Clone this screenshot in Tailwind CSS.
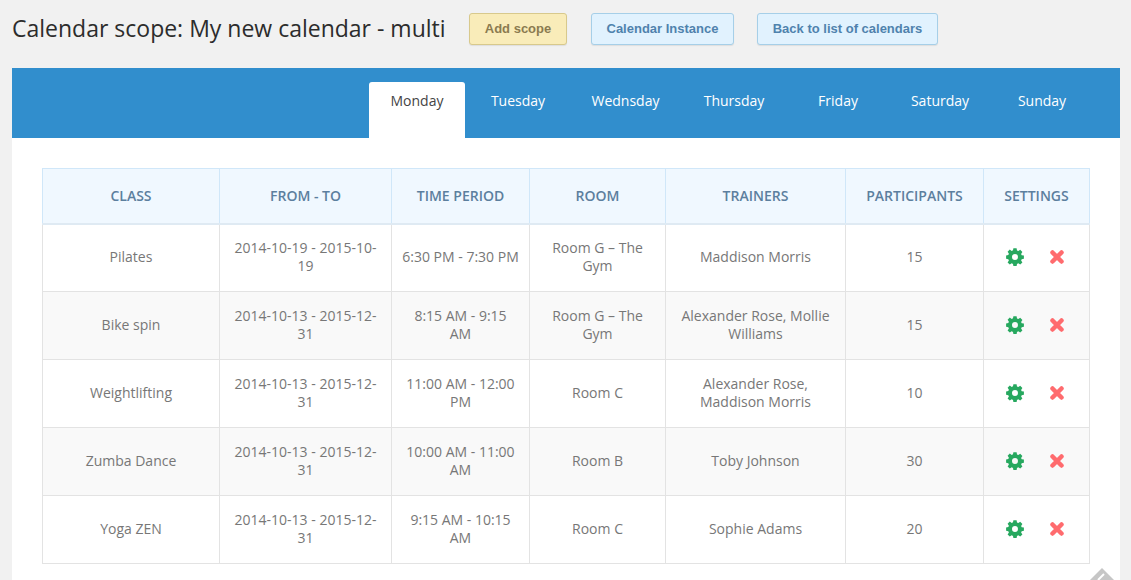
<!DOCTYPE html>
<html lang="en">
<head>
  <meta charset="UTF-8">
  <title>Calendar scope</title>
  <script src="https://cdn.jsdelivr.net/npm/@tailwindcss/browser@4"></script>
</head>
<body class="bg-[#f1f1f1] h-[580px] overflow-hidden font-['Open_Sans',sans-serif] relative">
  <!-- Title and actions -->
  <header class="flex items-center h-[68px] pl-3 pb-[11px]">
    <h1 class="text-[23px] leading-8 text-[#2c2c2c] w-[457px] whitespace-nowrap -mt-[2px]">Calendar scope: My new calendar - multi</h1>
    <a class="w-[98px] h-8 flex items-center justify-center rounded-[3px] border border-[#d8c98c] bg-[#f9ecb9] text-[#8b7b50] text-[13px] font-bold font-['Liberation_Sans',sans-serif] shadow-[0_1px_1px_rgba(0,0,0,0.08)]">Add scope</a>
    <a class="ml-6 w-[143px] h-8 flex items-center justify-center rounded-[3px] border border-[#a6cfe8] bg-[#e1f2fe] text-[#4f82ad] text-[13px] font-bold font-['Liberation_Sans',sans-serif] shadow-[0_1px_1px_rgba(0,0,0,0.08)]">Calendar Instance</a>
    <a class="ml-[23px] w-[181px] h-8 flex items-center justify-center rounded-[3px] border border-[#a6cfe8] bg-[#e1f2fe] text-[#4f82ad] text-[13px] font-bold font-['Liberation_Sans',sans-serif] shadow-[0_1px_1px_rgba(0,0,0,0.08)]">Back to list of calendars</a>
  </header>

  <main class="mx-3 w-[1108px] bg-white h-[512px]">
    <!-- Day tabs -->
    <nav class="h-[70px] bg-[#318ecd] pl-[357px] pt-[14px] flex text-[14px] text-white">
      <div class="w-[96px] h-14 rounded-t-[3px] bg-white text-[#444] text-center pt-[7px] leading-6 -mb-px">Monday</div>
      <div class="ml-1 w-[98px] text-center pt-[7px] leading-6">Tuesday</div>
      <div class="w-[117px] text-center pt-[7px] leading-6">Wednsday</div>
      <div class="w-[100px] text-center pt-[7px] leading-6">Thursday</div>
      <div class="w-[108px] text-center pt-[7px] leading-6">Friday</div>
      <div class="w-[96px] text-center pt-[7px] leading-6">Saturday</div>
      <div class="w-[108px] text-center pt-[7px] leading-6">Sunday</div>
    </nav>

    <div class="pt-[30px] pl-[30px]">
      <table class="w-[1047px] table-fixed border-collapse text-[14px] leading-[18px] text-[#777] text-center">
        <colgroup>
          <col class="w-[177px]"><col class="w-[172px]"><col class="w-[138px]"><col class="w-[136px]"><col class="w-[180px]"><col class="w-[138px]"><col class="w-[106px]">
        </colgroup>
        <thead>
          <tr class="h-[55px] bg-[#f0f8ff] text-[#5c7f9e] uppercase font-semibold">
            <th class="border border-[#d0e7f9] border-b-2 border-b-[#dfeaf3] font-semibold">Class</th>
            <th class="border border-[#d0e7f9] border-b-2 border-b-[#dfeaf3] font-semibold">From - To</th>
            <th class="border border-[#d0e7f9] border-b-2 border-b-[#dfeaf3] font-semibold">Time period</th>
            <th class="border border-[#d0e7f9] border-b-2 border-b-[#dfeaf3] font-semibold">Room</th>
            <th class="border border-[#d0e7f9] border-b-2 border-b-[#dfeaf3] font-semibold">Trainers</th>
            <th class="border border-[#d0e7f9] border-b-2 border-b-[#dfeaf3] font-semibold">Participants</th>
            <th class="border border-[#d0e7f9] border-b-2 border-b-[#dfeaf3] font-semibold">Settings</th>
          </tr>
        </thead>
        <tbody>
          <tr class="h-[68px]">
            <td class="border border-[#e3e3e3] px-[10px] pb-px">Pilates</td>
            <td class="border border-[#e3e3e3] px-[10px] pb-px">2014-10-19 - 2015-10-19</td>
            <td class="border border-[#e3e3e3] px-[10px] pb-px">6:30 PM - 7:30 PM</td>
            <td class="border border-[#e3e3e3] px-[10px] pb-px">Room G – The Gym</td>
            <td class="border border-[#e3e3e3] px-[10px] pb-px">Maddison Morris</td>
            <td class="border border-[#e3e3e3] px-[10px] pb-px">15</td>
            <td class="border border-[#e3e3e3] pb-px">
              <div class="flex items-center pl-[22px] gap-[26px]">
                <svg class="w-[18px] h-[18px]" viewBox="0 0 18 18"><path fill="#27a85f" fill-rule="evenodd" d="M7.4 0.3h3.2l.4 2.2 1.3.6 1.9-1.3 2.2 2.2-1.3 1.9.6 1.3 2.2.4v3.2l-2.2.4-.6 1.3 1.3 1.9-2.2 2.2-1.9-1.3-1.3.6-.4 2.2H7.4l-.4-2.2-1.3-.6-1.9 1.3-2.2-2.2 1.3-1.9-.6-1.3-2.2-.4V7.4l2.2-.4.6-1.3-1.3-1.9 2.2-2.2 1.9 1.3 1.3-.6zM9 6a3 3 0 1 0 0 6 3 3 0 0 0 0-6z"/></svg>
                <svg class="w-[14px] h-[14px]" viewBox="0 0 14 14"><path stroke="#ff6b6e" stroke-width="4.500" stroke-linecap="round" d="M2.500 2.500l9 9M11.500 2.500l-9 9"/></svg>
              </div>
            </td>
          </tr>
          <tr class="h-[68px] bg-[#f9f9f9]">
            <td class="border border-[#e3e3e3] px-[10px] pb-px">Bike spin</td>
            <td class="border border-[#e3e3e3] px-[10px] pb-px">2014-10-13 - 2015-12-31</td>
            <td class="border border-[#e3e3e3] px-[10px] pb-px">8:15 AM - 9:15 AM</td>
            <td class="border border-[#e3e3e3] px-[10px] pb-px">Room G – The Gym</td>
            <td class="border border-[#e3e3e3] px-[10px] pb-px">Alexander Rose, Mollie Williams</td>
            <td class="border border-[#e3e3e3] px-[10px] pb-px">15</td>
            <td class="border border-[#e3e3e3] pb-px">
              <div class="flex items-center pl-[22px] gap-[26px]">
                <svg class="w-[18px] h-[18px]" viewBox="0 0 18 18"><path fill="#27a85f" fill-rule="evenodd" d="M7.4 0.3h3.2l.4 2.2 1.3.6 1.9-1.3 2.2 2.2-1.3 1.9.6 1.3 2.2.4v3.2l-2.2.4-.6 1.3 1.3 1.9-2.2 2.2-1.9-1.3-1.3.6-.4 2.2H7.4l-.4-2.2-1.3-.6-1.9 1.3-2.2-2.2 1.3-1.9-.6-1.3-2.2-.4V7.4l2.2-.4.6-1.3-1.3-1.9 2.2-2.2 1.9 1.3 1.3-.6zM9 6a3 3 0 1 0 0 6 3 3 0 0 0 0-6z"/></svg>
                <svg class="w-[14px] h-[14px]" viewBox="0 0 14 14"><path stroke="#ff6b6e" stroke-width="4.500" stroke-linecap="round" d="M2.500 2.500l9 9M11.500 2.500l-9 9"/></svg>
              </div>
            </td>
          </tr>
          <tr class="h-[68px]">
            <td class="border border-[#e3e3e3] px-[10px] pb-px">Weightlifting</td>
            <td class="border border-[#e3e3e3] px-[10px] pb-px">2014-10-13 - 2015-12-31</td>
            <td class="border border-[#e3e3e3] px-[10px] pb-px">11:00 AM - 12:00 PM</td>
            <td class="border border-[#e3e3e3] px-[10px] pb-px">Room C</td>
            <td class="border border-[#e3e3e3] px-[10px] pb-px">Alexander Rose, Maddison Morris</td>
            <td class="border border-[#e3e3e3] px-[10px] pb-px">10</td>
            <td class="border border-[#e3e3e3] pb-px">
              <div class="flex items-center pl-[22px] gap-[26px]">
                <svg class="w-[18px] h-[18px]" viewBox="0 0 18 18"><path fill="#27a85f" fill-rule="evenodd" d="M7.4 0.3h3.2l.4 2.2 1.3.6 1.9-1.3 2.2 2.2-1.3 1.9.6 1.3 2.2.4v3.2l-2.2.4-.6 1.3 1.3 1.9-2.2 2.2-1.9-1.3-1.3.6-.4 2.2H7.4l-.4-2.2-1.3-.6-1.9 1.3-2.2-2.2 1.3-1.9-.6-1.3-2.2-.4V7.4l2.2-.4.6-1.3-1.3-1.9 2.2-2.2 1.9 1.3 1.3-.6zM9 6a3 3 0 1 0 0 6 3 3 0 0 0 0-6z"/></svg>
                <svg class="w-[14px] h-[14px]" viewBox="0 0 14 14"><path stroke="#ff6b6e" stroke-width="4.500" stroke-linecap="round" d="M2.500 2.500l9 9M11.500 2.500l-9 9"/></svg>
              </div>
            </td>
          </tr>
          <tr class="h-[68px] bg-[#f9f9f9]">
            <td class="border border-[#e3e3e3] px-[10px] pb-px">Zumba Dance</td>
            <td class="border border-[#e3e3e3] px-[10px] pb-px">2014-10-13 - 2015-12-31</td>
            <td class="border border-[#e3e3e3] px-[10px] pb-px">10:00 AM - 11:00 AM</td>
            <td class="border border-[#e3e3e3] px-[10px] pb-px">Room B</td>
            <td class="border border-[#e3e3e3] px-[10px] pb-px">Toby Johnson</td>
            <td class="border border-[#e3e3e3] px-[10px] pb-px">30</td>
            <td class="border border-[#e3e3e3] pb-px">
              <div class="flex items-center pl-[22px] gap-[26px]">
                <svg class="w-[18px] h-[18px]" viewBox="0 0 18 18"><path fill="#27a85f" fill-rule="evenodd" d="M7.4 0.3h3.2l.4 2.2 1.3.6 1.9-1.3 2.2 2.2-1.3 1.9.6 1.3 2.2.4v3.2l-2.2.4-.6 1.3 1.3 1.9-2.2 2.2-1.9-1.3-1.3.6-.4 2.2H7.4l-.4-2.2-1.3-.6-1.9 1.3-2.2-2.2 1.3-1.9-.6-1.3-2.2-.4V7.4l2.2-.4.6-1.3-1.3-1.9 2.2-2.2 1.9 1.3 1.3-.6zM9 6a3 3 0 1 0 0 6 3 3 0 0 0 0-6z"/></svg>
                <svg class="w-[14px] h-[14px]" viewBox="0 0 14 14"><path stroke="#ff6b6e" stroke-width="4.500" stroke-linecap="round" d="M2.500 2.500l9 9M11.500 2.500l-9 9"/></svg>
              </div>
            </td>
          </tr>
          <tr class="h-[68px]">
            <td class="border border-[#e3e3e3] px-[10px] pb-px">Yoga ZEN</td>
            <td class="border border-[#e3e3e3] px-[10px] pb-px">2014-10-13 - 2015-12-31</td>
            <td class="border border-[#e3e3e3] px-[10px] pb-px">9:15 AM - 10:15 AM</td>
            <td class="border border-[#e3e3e3] px-[10px] pb-px">Room C</td>
            <td class="border border-[#e3e3e3] px-[10px] pb-px">Sophie Adams</td>
            <td class="border border-[#e3e3e3] px-[10px] pb-px">20</td>
            <td class="border border-[#e3e3e3] pb-px">
              <div class="flex items-center pl-[22px] gap-[26px]">
                <svg class="w-[18px] h-[18px]" viewBox="0 0 18 18"><path fill="#27a85f" fill-rule="evenodd" d="M7.4 0.3h3.2l.4 2.2 1.3.6 1.9-1.3 2.2 2.2-1.3 1.9.6 1.3 2.2.4v3.2l-2.2.4-.6 1.3 1.3 1.9-2.2 2.2-1.9-1.3-1.3.6-.4 2.2H7.4l-.4-2.2-1.3-.6-1.9 1.3-2.2-2.2 1.3-1.9-.6-1.3-2.2-.4V7.4l2.2-.4.6-1.3-1.3-1.9 2.2-2.2 1.9 1.3 1.3-.6zM9 6a3 3 0 1 0 0 6 3 3 0 0 0 0-6z"/></svg>
                <svg class="w-[14px] h-[14px]" viewBox="0 0 14 14"><path stroke="#ff6b6e" stroke-width="4.500" stroke-linecap="round" d="M2.500 2.500l9 9M11.500 2.500l-9 9"/></svg>
              </div>
            </td>
          </tr>
        </tbody>
      </table>
    </div>
  </main>

  <!-- Corner resize handle, cut off by the window -->
  <svg class="absolute left-[1090px] top-[567px] w-6 h-[13px]" viewBox="0 0 24 13"><path fill="#c6c6c6" d="M12 1l12 12H0z"/><path stroke="#fff" stroke-width="2" d="M8 13l6-6"/></svg>
</body>
</html>
